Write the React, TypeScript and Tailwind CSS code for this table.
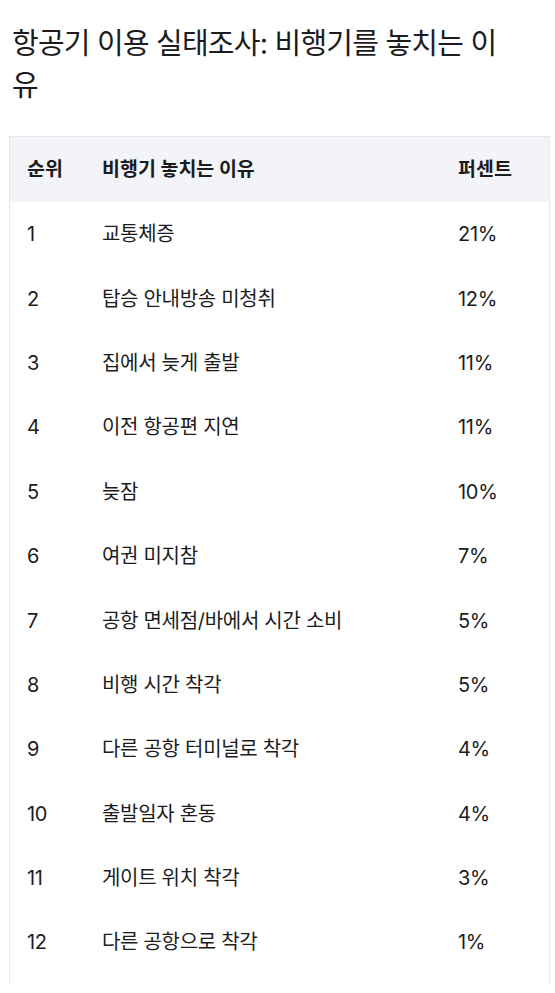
const rows: [string, string, string][] = [
  ['1', '교통체증', '21%'],
  ['2', '탑승 안내방송 미청취', '12%'],
  ['3', '집에서 늦게 출발', '11%'],
  ['4', '이전 항공편 지연', '11%'],
  ['5', '늦잠', '10%'],
  ['6', '여권 미지참', '7%'],
  ['7', '공항 면세점/바에서 시간 소비', '5%'],
  ['8', '비행 시간 착각', '5%'],
  ['9', '다른 공항 터미널로 착각', '4%'],
  ['10', '출발일자 혼동', '4%'],
  ['11', '게이트 위치 착각', '3%'],
  ['12', '다른 공항으로 착각', '1%'],
];

export default function App() {
  return (
    <div className="min-h-[993px] w-[555px] bg-white text-[#1c1c1e] font-['Inter','Noto_Sans_CJK_KR',sans-serif]">
      <h1 className="w-[505px] pt-[23px] pl-3 text-[29px] leading-[42px] font-normal tracking-[-0.8px]">
        항공기 이용 실태조사: 비행기를 놓치는 이유
      </h1>

      <div className="mt-[29px] ml-[9px] mr-[5px] border border-b-0 border-[#e6e7eb] pb-[9px]">
        <div className="grid h-[65px] grid-cols-[75px_356px_1fr] items-center bg-[#f3f4f8] pl-[17px] text-[19.5px] font-bold">
          <span>순위</span>
          <span>비행기 놓치는 이유</span>
          <span>퍼센트</span>
        </div>
        {rows.map(([rank, reason, pct]) => (
          <div
            key={rank}
            className="grid h-[64.4px] grid-cols-[75px_356px_1fr] items-center pl-[17px] text-[20px] tracking-[-0.3px]"
          >
            <span>{rank}</span>
            <span>{reason}</span>
            <span>{pct}</span>
          </div>
        ))}
      </div>
    </div>
  );
}
